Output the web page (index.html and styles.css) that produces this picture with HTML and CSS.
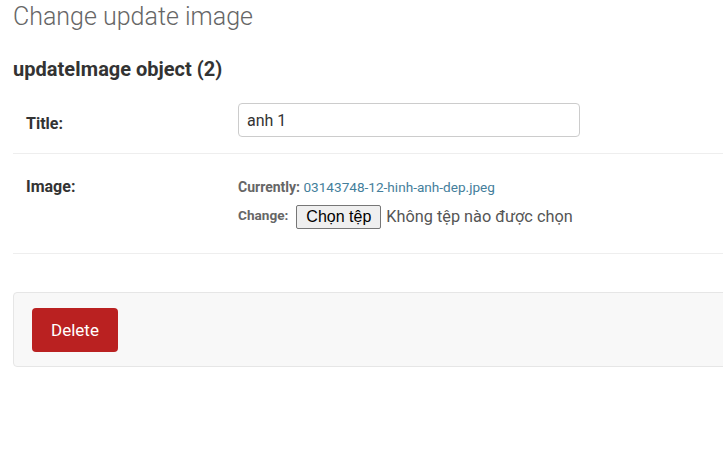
FILE: index.html
```html
<!DOCTYPE html>
<html>
<head>
<meta charset="utf-8">
<link rel="stylesheet" href="styles.css">
</head>
<body>
<div class="page">
  <h1 class="page-title">Change update image</h1>
  <h2 class="object-title">updateImage object (2)</h2>
  <form class="change-form">
    <div class="form-row row-title">
      <label class="field-label">Title:</label>
      <input class="text-input" type="text" value="anh 1">
    </div>
    <div class="form-row row-image">
      <label class="field-label">Image:</label>
      <div class="file-upload">
        <div class="file-line"><span class="file-key">Currently:</span> <a class="file-link" href="#">03143748-12-hinh-anh-dep.jpeg</a></div>
        <div class="change-line"><span class="file-key change-key">Change:</span><span class="file-btn">Chọn tệp</span><span class="file-none">Không tệp nào được chọn</span></div>
      </div>
    </div>
    <div class="submit-row">
      <a class="delete-btn" href="#">Delete</a>
    </div>
  </form>
</div>
</body>
</html>
```
FILE: styles.css
```css
html, body {
  margin: 0;
  padding: 0;
  overflow: hidden;
  background: #fff;
}
body {
  font-family: Roboto, "Liberation Sans", sans-serif;
  color: #333;
}
.page {
  width: 760px;
  padding-left: 13px;
}
.page-title {
  margin: 3px 0 0;
  font-size: 25px;
  font-weight: 300;
  color: #666;
  line-height: 28px;
}
.object-title {
  margin: 27px 0 0;
  font-size: 20px;
  font-weight: 700;
  color: #333;
  line-height: 23px;
}
.change-form {
  margin: 0;
}
.form-row {
  display: flex;
  align-items: flex-start;
  border-bottom: 1px solid #eee;
  padding-left: 13px;
}
.row-title {
  padding-top: 22px;
  padding-bottom: 16px;
}
.row-image {
  padding-top: 23px;
  padding-bottom: 24px;
}
.field-label {
  width: 212px;
  flex: none;
  font-size: 16px;
  font-weight: 700;
  color: #333;
  line-height: 20px;
}
.row-title .field-label {
  margin-top: 11px;
}
.text-input {
  width: 342px;
  height: 34px;
  box-sizing: border-box;
  border: 1px solid #ccc;
  border-radius: 4px;
  padding: 5px 8px;
  font-family: Roboto, "Liberation Sans", sans-serif;
  font-size: 16px;
  color: #333;
  margin: 0;
}
.file-upload {
  font-size: 14px;
  color: #666;
}
.file-line {
  line-height: 20px;
}
.change-line {
  display: flex;
  align-items: flex-start;
  margin-top: 8px;
}
.file-key {
  font-weight: 700;
  font-size: 14px;
}
.change-key {
  font-size: 13.6px;
  line-height: 14px;
  margin-top: 3px;
}
.file-link {
  font-size: 13.6px;
  color: #447e9b;
  text-decoration: none;
}
.file-btn {
  margin-left: 8px;
  font-family: Arial, "Liberation Sans", sans-serif;
  font-size: 16px;
  color: #000;
  background: #efefef;
  border: 1px solid #767676;
  border-radius: 2px;
  height: 24px;
  box-sizing: border-box;
  line-height: 22px;
  padding: 0 9px;
}
.file-none {
  margin-left: 5px;
  font-size: 16.3px;
  color: #555;
  line-height: 24px;
}
.submit-row {
  margin-top: 38px;
  background: #f8f8f8;
  border: 1px solid #e6e6e6;
  border-radius: 4px;
  padding: 15px 18px 14px;
  display: flex;
}
.delete-btn {
  display: block;
  width: 86px;
  height: 44px;
  box-sizing: border-box;
  background: #ba2121;
  color: #fff;
  border-radius: 4px;
  text-decoration: none;
  font-size: 17px;
  line-height: 44px;
  text-align: center;
}
```
